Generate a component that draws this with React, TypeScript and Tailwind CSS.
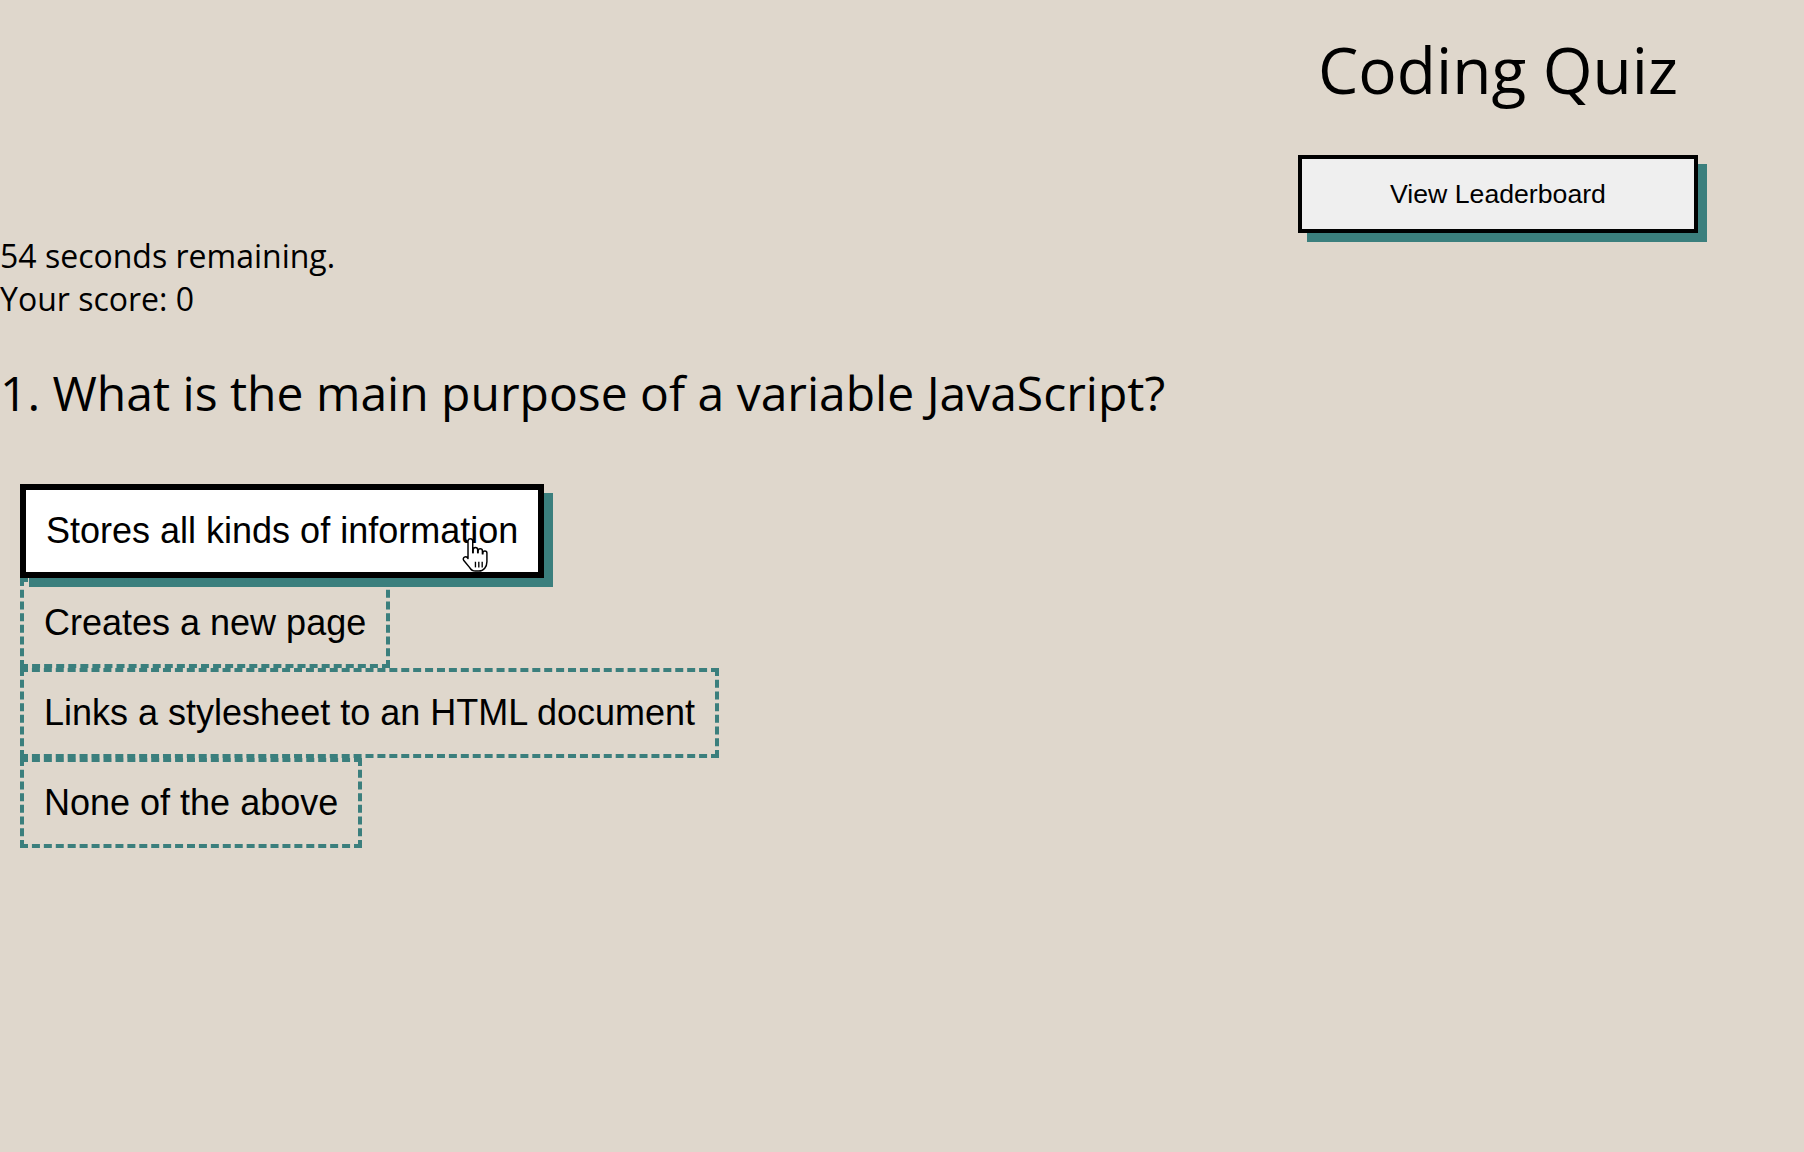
import React from "react";

function HandCursor() {
  return (
    <svg
      width="30"
      height="36"
      viewBox="0 0 26 32"
      className="pointer-events-none absolute left-[461px] top-[537px]"
    >
      <path
        d="M8 1.5c1.2 0 2.1.9 2.1 2.1V14h.4v-2.6c0-1.1.9-2 2-2s2 .9 2 2V14h.4v-1.6c0-1.1.9-1.9 1.9-1.9s1.9.8 1.9 1.9V15h.4v-.8c0-1 .8-1.8 1.8-1.8s1.8.8 1.8 1.8V22c0 4.3-2.8 8.3-7.1 8.3h-3.2c-2.4 0-3.9-1.2-5-3.1L2 20.6c-.6-1-.3-2.2.7-2.8.9-.5 2-.3 2.6.5l.6.9V3.6C5.9 2.4 6.8 1.5 8 1.5z"
        fill="white"
        stroke="black"
        strokeWidth="1.3"
        strokeLinejoin="round"
      />
      <line x1="12.5" y1="22" x2="12.5" y2="27" stroke="black" strokeWidth="1.2" />
      <line x1="15.5" y1="22" x2="15.5" y2="27" stroke="black" strokeWidth="1.2" />
      <line x1="18.5" y1="22" x2="18.5" y2="27" stroke="black" strokeWidth="1.2" />
    </svg>
  );
}

export default function App() {
  const others = [
    "Creates a new page",
    "Links a stylesheet to an HTML document",
    "None of the above",
  ];
  return (
    <div className="relative min-h-screen bg-[#dfd7cc] font-['Open_Sans',sans-serif] text-black">
      <header className="flex justify-end pr-[106px] pt-[26px]">
        <div className="flex w-[400px] flex-col items-center">
          <h1 className="m-0 text-[64px] font-normal leading-[normal]">Coding Quiz</h1>
          <button className="mt-[42px] h-[78px] w-full border-4 border-black bg-[#efefef] font-['Liberation_Sans',Arial,sans-serif] text-[26.67px] leading-[normal] text-black shadow-[9px_9px_0_#3b7f7d]">
            View Leaderboard
          </button>
        </div>
      </header>
      <div className="mt-px text-[32px] leading-[normal]">
        <p>54 seconds remaining.</p>
        <p>Your score: 0</p>
      </div>
      <h2 className="mb-[57px] mt-[40px] text-[48px] font-normal leading-[normal]">
        1. What is the main purpose of a variable JavaScript?
      </h2>
      <div className="flex flex-col items-start pl-[20px] font-['Liberation_Sans',Arial,sans-serif] text-[36px] leading-[normal]">
        <button className="mt-[2px] border-[6px] border-black bg-white p-[20px] text-left leading-[normal] shadow-[9px_9px_0_#3b7f7d]">
          Stores all kinds of information
        </button>
        {others.map((t) => (
          <button
            key={t}
            className="border-4 border-dashed border-[#3b7f7d] bg-transparent p-[20px] text-left leading-[normal]"
          >
            {t}
          </button>
        ))}
      </div>
      <HandCursor />
    </div>
  );
}
